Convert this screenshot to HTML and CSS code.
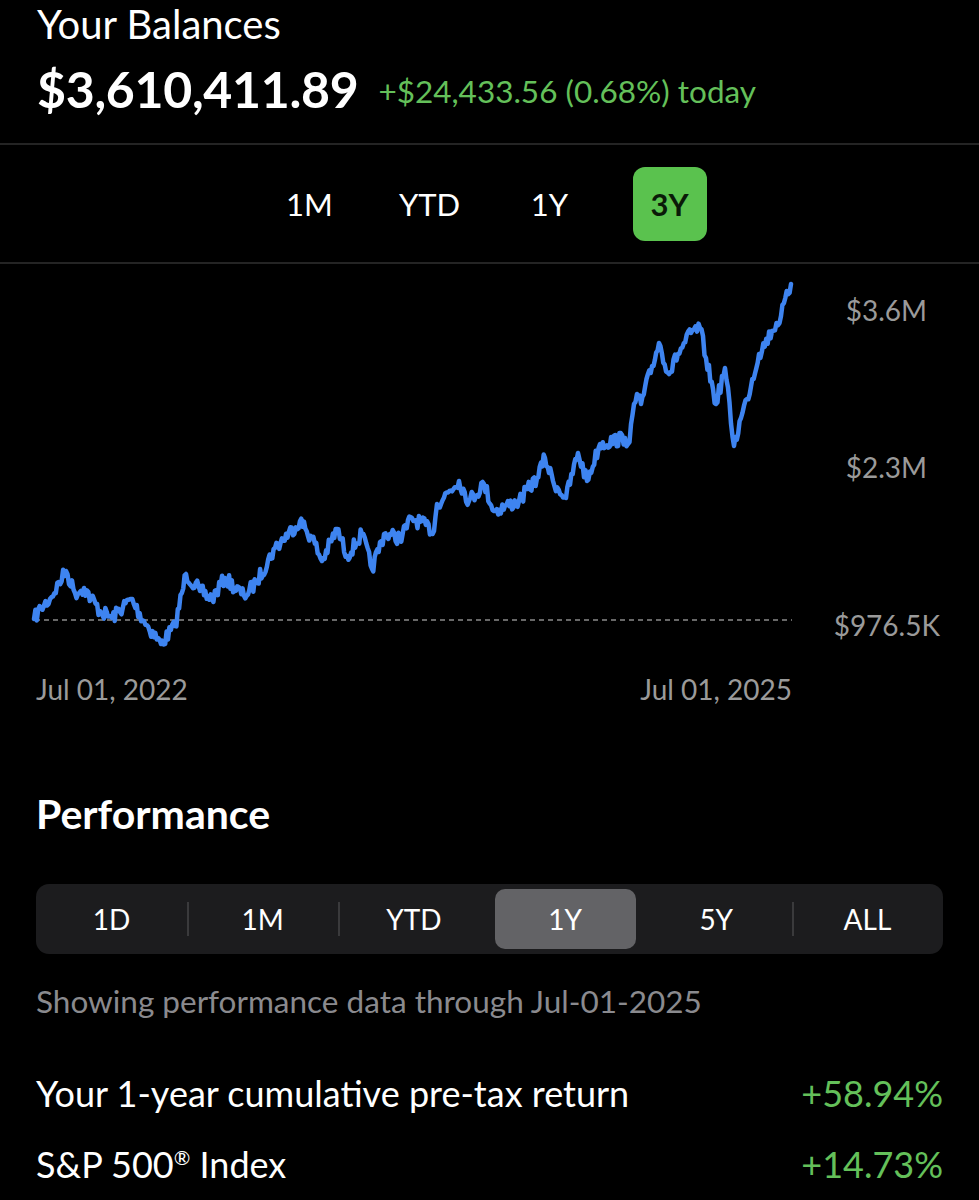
FILE: index.html
```html
<!DOCTYPE html>
<html lang="en">
<head>
	<meta charset="UTF-8">
	<meta name="viewport" content="width=device-width, initial-scale=1.0">
	<title>Your Balances</title>
	<link rel="stylesheet" href="styles.css">
</head>
<body>
	<main>
		<section class="balances">
			<h2 class="title">Your Balances</h2>
			<div class="total">
				<strong class="amount">$3,610,411.89</strong>
				<span class="change">+$24,433.56 (0.68%) today</span>
			</div>
		</section>
		<nav class="ranges">
			<button>1M</button>
			<button>YTD</button>
			<button>1Y</button>
			<button class="on">3Y</button>
		</nav>
		<section class="chart">
			<svg id="chart" width="979" height="458" viewBox="0 0 979 458">
				<line class="base" x1="35" y1="356" x2="792" y2="356"></line>
				<polyline id="line" class="line" points=""></polyline>
				<text class="axis" x="927" y="57" text-anchor="end">$3.6M</text>
				<text class="axis" x="927" y="214" text-anchor="end">$2.3M</text>
				<text class="axis" x="940" y="372" text-anchor="end">$976.5K</text>
				<text class="axis" x="36" y="436">Jul 01, 2022</text>
				<text class="axis" x="792" y="436" text-anchor="end">Jul 01, 2025</text>
			</svg>
		</section>
		<section class="perf">
			<h2 class="title big">Performance</h2>
			<div class="seg">
				<span>1D</span>
				<span>1M</span>
				<span>YTD</span>
				<span class="on">1Y</span>
				<span>5Y</span>
				<span>ALL</span>
			</div>
			<p class="note">Showing performance data through Jul-01-2025</p>
			<div class="row">
				<span>Your 1-year cumulative pre-tax return</span>
				<span class="up">+58.94%</span>
			</div>
			<div class="row">
				<span>S&amp;P 500<sup>&reg;</sup> Index</span>
				<span class="up">+14.73%</span>
			</div>
		</section>
	</main>
	<script>
		// anchor points traced from the 3Y balance curve (y is relative to chart top)
		const anchors = [
			[34,355],[41,344],[50,335],[66,307],[75,329],[84,324],[100,347],[112,354],
			[131,335],[144,357],[161,380],[175,362],[186,310],[200,327],[212,335],[225,314],
			[244,332],[256,319],[275,284],[300,257],[312,274],[322,297],[337,265],[347,292],
			[362,270],[372,305],[384,270],[400,274],[412,254],[434,267],[437,240],[459,217],
			[469,237],[484,220],[494,247],[519,237],[537,214],[545,194],[553,217],[566,234],
			[578,189],[587,217],[600,180],[625,174],[628,180],[637,130],[641,140],[659,79],
			[669,110],[678,90],[691,69],[700,64],[706,94],[716,140],[725,104],[734,182],
			[741,154],[747,135],[759,90],[772,67],[781,52],[791,20]
		];
		let seed = 7;
		const rnd = () => { seed = (seed * 16807) % 2147483647; return seed / 2147483647; };
		const pts = [];
		for(let i = 0; i < anchors.length - 1; i++){
			const [x1,y1] = anchors[i];
			const [x2,y2] = anchors[i+1];
			const steps = Math.max(2, Math.round((x2 - x1) / 1.4));
			for(let s = 0; s < steps; s++){
				const t = s / steps;
				let y = y1 + (y2 - y1) * t;
				if(s > 0) y += (rnd() - 0.5) * 14;
				pts.push((x1 + (x2 - x1) * t).toFixed(1) + ',' + y.toFixed(1));
			}
		}
		pts.push(anchors[anchors.length-1].join(','));
		document.querySelector('#line').setAttribute('points', pts.join(' '));
	</script>
</body>
</html>
```

FILE: styles.css
```css
*{ box-sizing: border-box; }
html,body{ background: #000; }
body,main,section,h2,p,div{ margin: 0; padding: 0; }
body{
	font-family: Lato, "Open Sans", sans-serif;
	color: #fff;
}
.balances{ padding: 0 37px 0; height: 143px; }
.title{ font-size: 40px; font-weight: 400; line-height: 48px; }
.total{
	display: flex; align-items: center; gap: 20px;
	margin-top: 11px;
}
.amount{ font-size: 50px; font-weight: 700; letter-spacing: -0.3px; }
.change{ font-size: 31.5px; color: #64c05a; padding-top: 4px; }

.ranges{
	border-top: 2px solid #242424;
	border-bottom: 2px solid #242424;
	height: 121px;
	display: flex; justify-content: center; align-items: center;
	gap: 46px;
}
.ranges button{
	background: none; border: 0;
	font-family: inherit; font-size: 31px; color: #fff;
	width: 74px; height: 74px;
	border-radius: 12px;
	padding: 0;
}
.ranges button.on{
	background: #5ac24e;
	color: #0a1a08;
	font-weight: 700;
}

.chart svg{ display: block; }
.line{
	fill: none; stroke: #3e84f0; stroke-width: 4.5;
	stroke-linejoin: round; stroke-linecap: round;
}
.base{ stroke: #8a8a8a; stroke-width: 1.5; stroke-dasharray: 5 4; }
.axis{ fill: #9a9a9a; font-family: Lato, sans-serif; font-size: 28px; }

.perf{ padding: 68px 36px 0; }
.big{ font-weight: 700; font-size: 41px; }
.seg{
	margin-top: 46px;
	display: grid; grid-template-columns: repeat(6, 1fr);
	background: #1c1c1e;
	border-radius: 13px;
	height: 70px;
	padding: 5px 0;
}
.seg span{
	display: flex; align-items: center; justify-content: center;
	font-size: 28px;
	position: relative;
	border-radius: 10px;
}
.seg span + span::before{
	content: ""; position: absolute; left: 0; top: 13px; bottom: 13px;
	width: 2px; background: #3a3a3c;
}
.seg span.on{ background: #636366; margin: 0 5px; }
.seg span.on::before, .seg span.on + span::before{ display: none; }
.note{
	margin-top: 28px;
	font-size: 31.5px; color: #8a8a8e;
}
.row{
	display: flex; justify-content: space-between;
	font-size: 36px;
	margin-top: 51px;
}
.row + .row{ margin-top: 27px; }
.row sup{ font-size: 20px; }
.up{ color: #64c05a; }
```
